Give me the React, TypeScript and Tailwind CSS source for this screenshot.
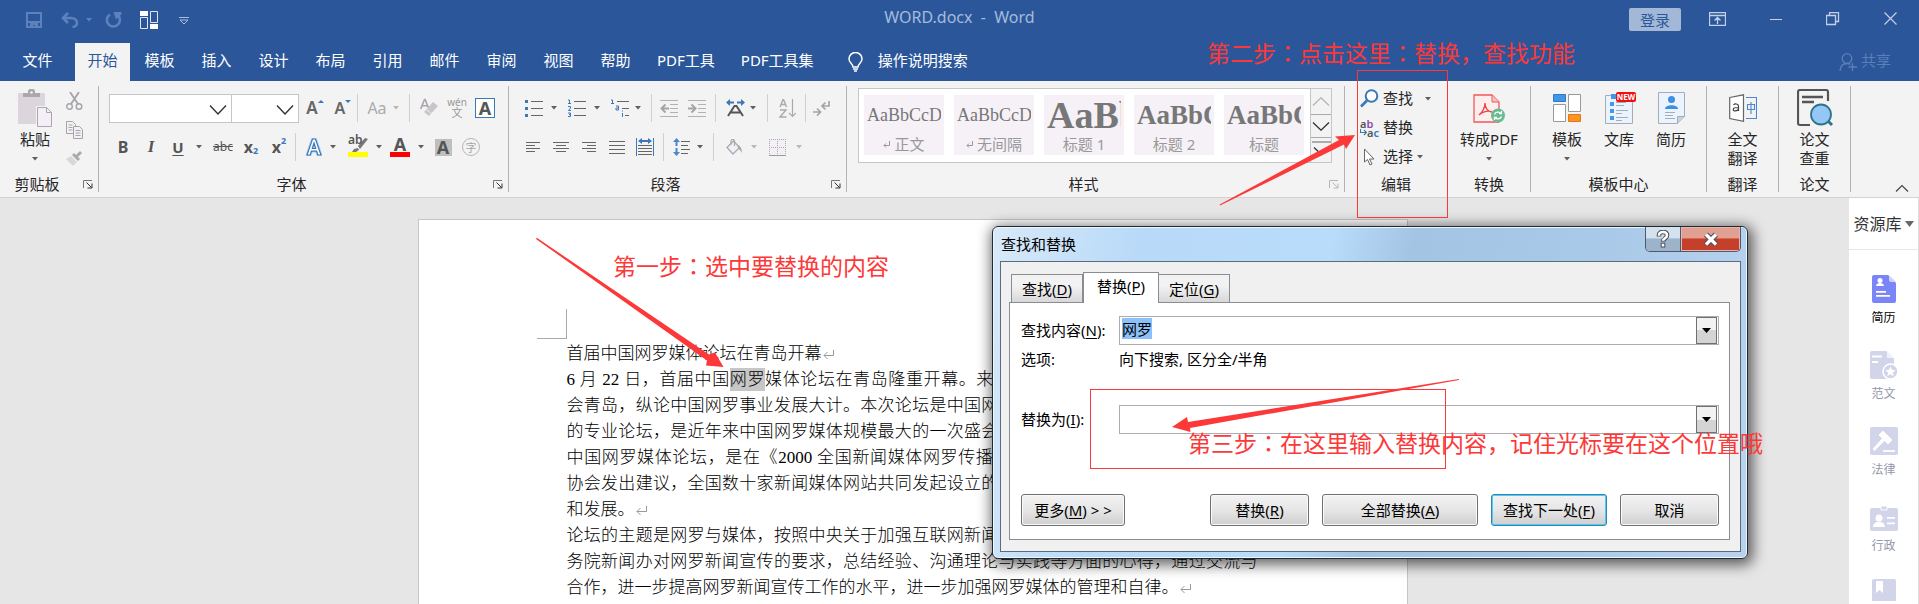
import React, { useEffect, useRef } from "react";

type Kids = { children?: React.ReactNode };

/* ---------- small shared pieces ---------- */

function Ico({ w, h, className = "", children }: Kids & { w: number; h: number; className?: string }) {
  return (
    <svg width={w} height={h} viewBox={`0 0 ${w} ${h}`} fill="none" aria-hidden="true" className={`shrink-0 ${className}`}>
      {children}
    </svg>
  );
}

function Caret({ faint = false }: { faint?: boolean }) {
  return (
    <Ico w={6} h={4}>
      <path d="M0 0h6L3 3.6z" fill={faint ? "#b8b8b8" : "#5f5f5f"} />
    </Ico>
  );
}

function Tool({ label, className, children }: Kids & { label: string; className: string }) {
  return (
    <button type="button" aria-label={label} title={label} className={`flex h-8 shrink-0 items-center justify-center ${className}`}>
      {children}
    </button>
  );
}

function Sep({ className = "w-2" }: { className?: string }) {
  return (
    <div className={`flex h-7 shrink-0 justify-center ${className}`}>
      <div className="w-px bg-[#d0d0d0]" />
    </div>
  );
}

function Group({ label, width, launcher, faint, children }: Kids & { label: string; width: string; launcher?: boolean; faint?: boolean }) {
  return (
    <section aria-label={label} className={`flex h-[106px] shrink-0 flex-col border-r border-[#b4b4b4] ${width}`}>
      <div className="flex min-h-0 flex-1 flex-col">{children}</div>
      <div className="flex h-[15px] items-center">
        <span className="flex-1 text-center leading-[15px]">{label}</span>
        {launcher && (
          <button type="button" aria-label={`${label}设置`} className="w-6 pl-[9px]">
            <Ico w={10} h={9}>
              <path d="M.5 8V.5H9" stroke={faint ? "#b5b5b5" : "#777"} />
              <path d="M3.5 2.5l5 5M9 3.5V8H4.5" stroke={faint ? "#b5b5b5" : "#333"} />
            </Ico>
          </button>
        )}
      </div>
    </section>
  );
}

function BigButton({ lines, caret, width, children }: Kids & { lines: string[]; caret?: boolean; width: string }) {
  return (
    <button type="button" className={`flex flex-col items-center ${width}`}>
      <span className="flex h-11 items-center justify-center">{children}</span>
      {lines.map((t) => (
        <span key={t} className="whitespace-nowrap leading-[19px]">{t}</span>
      ))}
      {caret && (
        <span className="flex h-5 items-center"><Caret /></span>
      )}
    </button>
  );
}

/* ---------- title bar and tabs ---------- */

function TitleBar() {
  return (
    <div className="grid h-[43px] grid-cols-[1fr_auto_1fr] pt-1">
      <div className="flex h-8 items-center pl-[26px] text-[#5c81bd]">
        <button type="button" aria-label="保存" className="mr-[19px]">
          <Ico w={16} h={16}>
            <path d="M1 1h14v14H1zM1 10h14" stroke="currentColor" strokeWidth="2" />
            <path d="M4 10h8v6H9v-3H7v3H4z" fill="currentColor" />
          </Ico>
        </button>
        <button type="button" aria-label="撤消" className="flex items-center gap-[7px]">
          <Ico w={18} h={16}>
            <path d="M2 6h8c4 0 6 2.300 6 4.800S14 15 11.500 15M7 1L2 6l5 5" stroke="currentColor" strokeWidth="2.600" />
          </Ico>
          <Ico w={6} h={4}><path d="M0 0h6L3 3.600z" fill="currentColor" /></Ico>
        </button>
        <button type="button" aria-label="重复" className="ml-[13px]">
          <Ico w={18} h={16}>
            <path d="M5 2.500A6.500 6.500 0 1 0 12.500 3" stroke="currentColor" strokeWidth="2.600" />
            <path d="M8.500 0h8v2.200L11 7.500z" fill="currentColor" />
          </Ico>
        </button>
        <button type="button" aria-label="触摸模式" className="ml-[17px]">
          <Ico w={18} h={18}>
            <path d="M.5 6.500h7v11h-7zM10.500.5h7v11h-7z" stroke="#dfe7f3" />
            <path d="M0 0h8v5H0zM10 13h8v5h-8z" fill="#fff" />
          </Ico>
        </button>
        <button type="button" aria-label="自定义快速访问工具栏" className="ml-[21px] pt-0.5">
          <Ico w={10} h={8}><path d="M0 .5h10M1 3l4 4 4-4z" stroke="#a9bddb" /></Ico>
        </button>
      </div>
      <h1 className="whitespace-pre pt-0.5 text-[16px] leading-[22px] text-[#a5bbdc]">WORD.docx  -  Word</h1>
      <div className="flex items-start justify-end pr-[22px] pt-1 text-[#c3d0e6]">
        <button type="button" className="mr-7 h-[23px] w-[52px] rounded-xs bg-[#a3b8d6] leading-[22px] text-[#2b579a]">登录</button>
        <button type="button" aria-label="功能区显示选项" className="mr-11 mt-1">
          <Ico w={17} h={14}>
            <path d="M.5.5h16v13H.5zM.5 3.500h16M8.500 12V6M5.500 8.500l3-3 3 3" stroke="currentColor" strokeWidth="1.300" />
          </Ico>
        </button>
        <button type="button" aria-label="最小化" className="mr-11 mt-[11px]">
          <Ico w={12} h={2}><path d="M0 .5h12" stroke="currentColor" /></Ico>
        </button>
        <button type="button" aria-label="还原" className="mr-11 mt-1">
          <Ico w={14} h={14}><path d="M.5 3.500h9v9h-9zM3.500 3.500v-3h9v9h-3" stroke="currentColor" strokeWidth="1.300" /></Ico>
        </button>
        <button type="button" aria-label="关闭" className="mt-1">
          <Ico w={13} h={13}><path d="M.5.5l12 12M12.500.5l-12 12" stroke="currentColor" strokeWidth="1.200" /></Ico>
        </button>
      </div>
    </div>
  );
}

const shortTabs = ["开始", "模板", "插入", "设计", "布局", "引用", "邮件", "审阅", "视图", "帮助"];

function TabBar() {
  return (
    <nav className="flex h-[38px] items-stretch pr-7 text-white">
      <button type="button" className="w-[75px] pb-1">文件</button>
      <div className="flex gap-0.5">
        {shortTabs.map((t) => (
          <button key={t} type="button" className={`w-[55px] pb-1 ${t === "开始" ? "bg-[#f3f3f3] text-[#2b579a]" : ""}`}>{t}</button>
        ))}
        <button type="button" className="px-3 pb-1">PDF工具</button>
        <button type="button" className="px-3 pb-1">PDF工具集</button>
      </div>
      <button type="button" className="ml-[22px] flex items-center gap-[15px] pb-1">
        <Ico w={15} h={20} className="mt-1">
          <path d="M5 15c0-3-4-4-4-8a6.500 6.500 0 0 1 13 0c0 4-4 5-4 8zM5 17h5M6 19h3" stroke="#fff" strokeWidth="1.500" />
        </Ico>
        操作说明搜索
      </button>
      <button type="button" className="ml-auto flex items-center gap-1 pb-1 text-[#5b7fba]">
        <Ico w={18} h={18} className="mt-1">
          <circle cx="8" cy="5.500" r="4.800" stroke="currentColor" strokeWidth="1.300" />
          <path d="M1 18c.3-4.500 3-7.500 7-7.500 1.500 0 2.600.3 3.500 1M13.500 10v8M9.500 14h8.500" stroke="currentColor" strokeWidth="1.300" />
        </Ico>
        共享
      </button>
    </nav>
  );
}

/* ---------- ribbon ---------- */

function ComboBox({ label, width }: { label: string; width: string }) {
  return (
    <div className={`relative h-[29px] border border-[#c6c6c6] bg-white ${width}`}>
      <select aria-label={label} className="size-full appearance-none bg-transparent outline-none" />
      <Ico w={18} h={10} className="pointer-events-none absolute right-1 top-[10px]">
        <path d="M1 .5l8 8.500 8-8.500" stroke="#333" strokeWidth="1.400" />
      </Ico>
    </div>
  );
}

function ClipboardGroup() {
  return (
    <Group label="剪贴板" width="w-[99px]" launcher>
      <div className="flex">
        <div className="w-[66px] pl-1">
          <BigButton lines={["粘贴"]} caret width="w-[62px]">
            <Ico w={34} h={38}>
              <path d="M0 4h27v31H0z" fill="#dcd6dc" />
              <path d="M5 8V4h5V2c0-1 1-2 2-2h3c1 0 2 1 2 2v2h5v4z" fill="#a9a9ab" />
              <circle cx="13.500" cy="3.500" r="1.300" fill="#f3f3f3" />
              <path d="M19.500 18.500h9l5 5v14h-14z" fill="#f4eff7" stroke="#f3f3f3" strokeWidth="3" />
              <path d="M19.500 18.500h9l5 5v14h-14zM28.500 18.500v5h5" fill="#f4eff7" stroke="#aaa6ac" />
            </Ico>
          </BigButton>
        </div>
        <div className="flex flex-col">
          <button type="button" aria-label="剪切" className="flex h-[29px] items-center">
            <Ico w={17} h={18}>
              <path d="M4 0l8 12M13 0L5 12" stroke="#a6a3a8" strokeWidth="1.800" />
              <circle cx="3.500" cy="14.500" r="2.800" stroke="#a6a3a8" strokeWidth="1.400" />
              <circle cx="13" cy="14.500" r="2.800" stroke="#a6a3a8" strokeWidth="1.400" />
            </Ico>
          </button>
          <button type="button" aria-label="复制" className="flex h-[29px] items-center">
            <Ico w={17} h={18}>
              <path d="M.5.500h6l3 3v9h-9zM2.500 4h4M2.500 6.500h4M2.500 9h4" stroke="#a6a3a8" />
              <path d="M7.500 5.500h6l3 3v9h-9z" fill="#f4eff7" stroke="#a6a3a8" />
              <path d="M9.500 9.500h5M9.500 12h5M9.500 14.500h5" stroke="#a6a3a8" />
            </Ico>
          </button>
          <button type="button" aria-label="格式刷" className="flex h-[29px] items-center">
            <Ico w={17} h={15}>
              <path d="M0 8l5-3 6 6-4 4z" fill="#dcd6dc" />
              <path d="M6 4l6 6 2-2-2-2 4-4-2-2-4 4-2-2z" fill="#a9a9ab" />
            </Ico>
          </button>
        </div>
      </div>
    </Group>
  );
}

const glyph = "font-bold text-[#555]";

function FontGroup() {
  return (
    <Group label="字体" width="w-[410px]" launcher>
      <div className="flex flex-col gap-[7px] pl-2.5 pt-1.5">
        <div className="flex h-8 items-center">
          <ComboBox label="字体名称" width="w-[123px]" />
          <ComboBox label="字号" width="-ml-px w-[68px]" />
          <Tool label="增大字号" className="w-7 pl-1">
            <span className="text-[17px] font-semibold text-[#666]">A</span>
            <Ico w={6} h={16}><path d="M0 3l3-3 3 3z" fill="#3a78b7" /></Ico>
          </Tool>
          <Tool label="减小字号" className="w-7 pl-1">
            <span className="text-[16px] font-semibold text-[#666]">A</span>
            <Ico w={6} h={16}><path d="M0 0h6L3 3z" fill="#3a78b7" /></Ico>
          </Tool>
          <Sep className="w-1" />
          <Tool label="更改大小写" className="w-12 gap-1.5">
            <span className="text-[16px] text-[#aaa]">Aa</span>
            <Caret faint />
          </Tool>
          <Sep className="w-1" />
          <Tool label="清除所有格式" className="w-9">
            <Ico w={18} h={20}>
              <path d="M.7 11L4.500 1.500h.6L9 11M2 7.800h5.500" stroke="#a9a6ab" strokeWidth="1.600" />
              <path d="M13 4l5 4-9 10-5-4z" fill="#cbc4cb" />
              <path d="M6.500 11.500l5 4.200" stroke="#f3f3f3" />
            </Ico>
          </Tool>
          <Tool label="拼音指南" className="w-5 flex-col">
            <span className="text-[10px] leading-[9px] text-[#999]">wén</span>
            <span className="text-[11px] leading-[11px] text-[#999]">文</span>
          </Tool>
          <Tool label="字符边框" className="w-9">
            <span className={`flex size-5 items-center justify-center border border-[#3a78b7] bg-white text-[18px] leading-none ${glyph}`}>A</span>
          </Tool>
        </div>
        <div className="flex h-8 items-center">
          <Tool label="加粗" className={`w-7 text-[16px] ${glyph}`}>B</Tool>
          <Tool label="倾斜" className={`w-7 font-['Liberation_Serif'] text-[17px] italic ${glyph}`}>I</Tool>
          <Tool label="下划线" className={`w-11 gap-3 text-[15px] ${glyph}`}>
            <span className="underline underline-offset-2">U</span>
            <Caret />
          </Tool>
          <Tool label="删除线" className="w-7 text-[12px] text-[#555] line-through">abc</Tool>
          <Tool label="下标" className={`w-7 text-[16px] ${glyph}`}>
            x<span className="pt-2 text-[9px] text-[#3a78b7]">2</span>
          </Tool>
          <Tool label="上标" className={`w-7 text-[16px] ${glyph}`}>
            x<span className="pb-3 text-[9px] text-[#3a78b7]">2</span>
          </Tool>
          <Sep className="w-1" />
          <Tool label="文本效果" className="w-12 gap-2">
            <Ico w={16} h={18}>
              <path d="M1 17L6.500 1h3L15 17h-3.200l-1.200-3.800H5.400L4.200 17zM6.300 10.500h3.400L8 5z" fill="#fff" stroke="#b9d5f0" strokeWidth="3" />
              <path d="M1 17L6.500 1h3L15 17h-3.200l-1.200-3.800H5.400L4.200 17zM6.300 10.500h3.400L8 5z" fill="#fff" stroke="#3a78b7" strokeWidth="1.200" />
            </Ico>
            <Caret />
          </Tool>
          <Tool label="突出显示" className="w-10 gap-2">
            <span className="relative flex h-5 w-5 flex-col justify-end">
              <span className="absolute left-0 top-[-4px] text-[12px] font-semibold leading-[14px] text-[#555]">ab</span>
              <Ico w={20} h={15}><path d="M4 15l2-3 4-1 1 2-3 2zM10 9L17 1l3 1-8 10z" fill="#777" /></Ico>
              <span className="h-[5px] bg-[#ff0]" />
            </span>
            <Caret />
          </Tool>
          <Tool label="字体颜色" className="w-11 gap-2">
            <span className="flex w-5 flex-col items-center">
              <span className={`text-[18px] leading-[15px] ${glyph}`}>A</span>
              <span className="h-[5px] w-full bg-[#f00]" />
            </span>
            <Caret />
          </Tool>
          <Tool label="字符底纹" className="w-7">
            <span className={`flex size-[17px] items-center justify-center bg-[#bfbfbf] text-[18px] leading-none ${glyph}`}>A</span>
          </Tool>
          <Tool label="带圈字符" className="w-7">
            <span className="flex size-[18px] items-center justify-center rounded-full border border-[#b9b4ba] text-[11px] leading-none text-[#a5a5a5]">字</span>
          </Tool>
        </div>
      </div>
    </Group>
  );
}

function ParagraphGroup() {
  return (
    <Group label="段落" width="w-[338px]" launcher>
      <div className="flex flex-col gap-[7px] pl-2.5 pt-1.5">
        <div className="flex h-8 items-center">
          <Tool label="项目符号" className="w-11 gap-2">
            <Ico w={18} h={18}>
              <path d="M6 2.500h12M6 9.500h12M6 16.500h12" stroke="#666" />
              <path d="M0 1h3v3H0zM0 8h3v3H0zM0 15h3v3H0z" fill="#3a78b7" />
            </Ico>
            <Caret />
          </Tool>
          <Tool label="编号" className="w-[42px] gap-2">
            <Ico w={18} h={18}>
              <path d="M6 2.500h12M6 9.500h12M6 16.500h12" stroke="#666" />
              <path d="M0 1h1.500v3.500M0 4.500h3M0 7.500h2.500v1.500L.5 11.500H3M0 14h2.500v1.500H1 2.500v2H0" stroke="#3a78b7" />
            </Ico>
            <Caret />
          </Tool>
          <Tool label="多级列表" className="w-[42px] gap-1.5">
            <Ico w={18} h={18}>
              <path d="M6 2.500h12M11 9.500h7M14 16.500h4" stroke="#666" />
              <path d="M0 1h1.500v3.500M0 4.500h3M5 7h2.500v4H5V9h2M11.500 13v0M11.500 14v4M11.500 11.500v1" stroke="#3a78b7" />
            </Ico>
            <Caret />
          </Tool>
          <Sep />
          <Tool label="减少缩进量" className="w-7">
            <Ico w={18} h={17}>
              <path d="M0 .5h18M10 4.500h8M10 8.500h8M10 12.500h8M0 16.500h18" stroke="#b2b2b2" />
              <path d="M9 8.500H2M5.500 4.500l-4 4 4 4" stroke="#a5a5a5" strokeWidth="2" />
            </Ico>
          </Tool>
          <Tool label="增加缩进量" className="w-7">
            <Ico w={18} h={17}>
              <path d="M0 .5h18M10 4.500h8M10 8.500h8M10 12.500h8M0 16.500h18" stroke="#b2b2b2" />
              <path d="M0 8.500h7M3.500 4.500l4 4-4 4" stroke="#a5a5a5" strokeWidth="2" />
            </Ico>
          </Tool>
          <Sep />
          <Tool label="中文版式" className="w-11 gap-[5px]">
            <Ico w={19} h={18}>
              <path d="M2 17L8.500 7h2L17 17M5 13.500h9" stroke="#555" strokeWidth="2" />
              <path d="M0 3.500L4 0v2.500h4v2H4V7zM19 3.500L15 0v2.500h-4v2h4V7z" fill="#3a78b7" />
            </Ico>
            <Caret />
          </Tool>
          <Sep />
          <Tool label="排序" className="w-8">
            <Ico w={17} h={19}>
              <path d="M1 8L4 .5h.5L7.500 8M2 5.500h4.500M1 11h6L1 18h6.500" stroke="#aaa" strokeWidth="1.400" />
              <path d="M13.500 0v17M10 14l3.500 3.500L17 14" stroke="#aaa" strokeWidth="1.200" />
            </Ico>
          </Tool>
          <Sep className="w-1" />
          <Tool label="显示编辑标记" className="w-7">
            <Ico w={17} h={16}>
              <path d="M16 1v5h-6M12.500 2.500L9 6l3.500 3.500M0 12h7M4 8.500L7.500 12 4 15.500" stroke="#a5a5a5" strokeWidth="1.700" />
            </Ico>
          </Tool>
        </div>
        <div className="flex h-8 items-center">
          <Tool label="左对齐" className="w-7">
            <Ico w={14} h={11}><path d="M0 .5h14M0 3.500h9M0 6.500h14M0 9.500h9" stroke="#666" /></Ico>
          </Tool>
          <Tool label="居中" className="w-7">
            <Ico w={16} h={11}><path d="M0 .5h16M3 3.500h10M0 6.500h16M3 9.500h10" stroke="#666" /></Ico>
          </Tool>
          <Tool label="右对齐" className="w-7">
            <Ico w={14} h={11}><path d="M0 .5h14M5 3.500h9M0 6.500h14M5 9.500h9" stroke="#666" /></Ico>
          </Tool>
          <Tool label="两端对齐" className="w-7">
            <Ico w={16} h={13}><path d="M0 .5h16M0 4.500h16M0 8.500h16M0 12.500h16" stroke="#666" /></Ico>
          </Tool>
          <Tool label="分散对齐" className="w-7">
            <Ico w={18} h={18}>
              <path d="M2 7.500h14M2 10.500h14M2 13.500h14M2 16.500h14" stroke="#666" />
              <path d="M.5 0v18M17.500 0v18" stroke="#3a78b7" />
              <path d="M2 3l4-3v2h6V0l4 3-4 3V4H6v2z" fill="#3a78b7" />
            </Ico>
          </Tool>
          <Sep />
          <Tool label="行距" className="w-[42px] gap-[7px]">
            <Ico w={17} h={18}>
              <path d="M8 3.500h9M8 7.500h7M8 11.500h9M8 15.500h7" stroke="#666" />
              <path d="M3.500 0L7 4H4.500v4h-2V4H0zM3.500 18L0 14h2.500v-4h2v4H7z" fill="#4a86c8" />
            </Ico>
            <Caret />
          </Tool>
          <Sep />
          <Tool label="底纹" className="w-12 gap-2">
            <Ico w={17} h={17}>
              <path d="M1 8.500L7.500 2l6 6.500L7 15z" fill="#f4eff7" stroke="#aaa" strokeWidth="1.300" />
              <path d="M5 6V2c0-2 3.500-2 3.500 0v5" stroke="#aaa" strokeWidth="1.200" />
              <path d="M11 6c3 0 5 3 5 8-1-2-2-3-3.500-4z" fill="#aaa" />
            </Ico>
            <Caret faint />
          </Tool>
          <Tool label="边框" className="w-10 gap-2.5">
            <Ico w={17} h={17}>
              <path d="M.5.5h16v16H.5z" fill="#f4eff7" />
              <path d="M0 .5h17M.5 0v16M16.500 0v16M8.500 0v16M0 8.500h17" stroke="#aaa" strokeDasharray="1 1" />
              <path d="M0 16.500h17" stroke="#999" />
            </Ico>
            <Caret faint />
          </Tool>
        </div>
      </div>
    </Group>
  );
}

const styles = [
  { name: "正文", sample: "AaBbCcD", cls: "text-[18px]", mark: true },
  { name: "无间隔", sample: "AaBbCcD", cls: "text-[18px]", mark: true },
  { name: "标题 1", sample: "AaBb", cls: "text-[38px] font-bold" },
  { name: "标题 2", sample: "AaBbC", cls: "text-[27px] font-bold" },
  { name: "标题", sample: "AaBbC", cls: "text-[27px] font-bold" },
];

function StylesGroup() {
  return (
    <Group label="样式" width="w-[498px]" launcher faint>
      <div className="ml-[11px] mt-0.5 flex h-[75px] w-[474px] border border-[#c6c6c6] bg-white">
        <div className="flex flex-1 gap-2.5 pl-[5px] pt-1.5">
          {styles.map((s) => (
            <button key={s.name} type="button" className="flex h-[60px] w-20 shrink-0 flex-col overflow-hidden bg-[#f5f1f7]">
              <span className={`mx-[3px] flex h-10 w-[74px] items-center overflow-hidden whitespace-nowrap font-['Liberation_Serif'] leading-none text-[#777] ${s.cls}`}>{s.sample}</span>
              <span className="flex w-full items-center justify-center gap-1 leading-[18px] text-[#999]">
                {s.mark && (
                  <Ico w={7} h={7}><path d="M6.500 0v4.500H1M3 2.500l-2 2 2 2" stroke="#999" /></Ico>
                )}
                {s.name}
              </span>
            </button>
          ))}
        </div>
        <div className="flex w-[21px] flex-col border-l border-[#c6c6c6] bg-[#f3f3f3]">
          <button type="button" aria-label="上一行" className="flex h-[25px] items-center justify-center">
            <Ico w={18} h={9}><path d="M1 8.500L9 .8l8 7.700" stroke="#b4b4b4" strokeWidth="1.300" /></Ico>
          </button>
          <button type="button" aria-label="下一行" className="flex h-6 items-center justify-center border-y border-[#aaa]">
            <Ico w={18} h={9}><path d="M1 .5l8 7.700L17 .5" stroke="#333" strokeWidth="1.300" /></Ico>
          </button>
          <button type="button" aria-label="其他" className="flex flex-1 items-start justify-center pt-0.5">
            <Ico w={19} h={16}><path d="M0 2h19" stroke="#666" /><path d="M2 7.500l7.500 7 7.500-7" stroke="#333" strokeWidth="1.300" /></Ico>
          </button>
        </div>
      </div>
    </Group>
  );
}

function EditGroup() {
  return (
    <Group label="编辑" width="w-[103px]">
      <div className="-mt-0.5 flex flex-col pl-[15px]">
        <button type="button" className="flex h-[29px] items-center gap-1">
          <Ico w={19} h={19}>
            <circle cx="11.500" cy="7" r="5.800" fill="#fff" stroke="#3a78b7" strokeWidth="2" />
            <path d="M7 11.500L1 17.500" stroke="#3a78b7" strokeWidth="2.600" />
          </Ico>
          查找
          <span className="pl-2"><Caret /></span>
        </button>
        <button type="button" className="flex h-[29px] items-center gap-1">
          <span className="grid w-[19px] text-[11px] font-semibold leading-[9px]">
            <span className="text-left text-[#555]">a<span className="text-[#8b4fae]">b</span></span>
            <span className="flex items-center justify-end text-[#555]">
              <Ico w={7} h={7}><path d="M.5 0v3.500H6M4 1l2.500 2.500L4 6" stroke="#3a78b7" strokeWidth="1.200" /></Ico>
              a<span className="text-[#3a78b7]">c</span>
            </span>
          </span>
          替换
        </button>
        <button type="button" className="flex h-[29px] items-center gap-1">
          <Ico w={19} h={18}>
            <path d="M4.500 1v13l3-2.500 2.500 5.500 2-1-2.500-5h4.500z" fill="#fff" stroke="#666" />
          </Ico>
          选择
          <Caret />
        </button>
      </div>
    </Group>
  );
}

function Ribbon() {
  return (
    <div className="flex h-[117px] border-b border-[#d2d2d2] bg-[#f3f3f3] py-[5px] text-[#262626]">
      <ClipboardGroup />
      <FontGroup />
      <ParagraphGroup />
      <StylesGroup />
      <EditGroup />
      <Group label="转换" width="w-[83px]">
        <BigButton lines={["转成PDF"]} caret width="w-[82px]">
          <Ico w={32} h={29}>
            <path d="M1 1h18l7 7v20H1z" fill="#fdeeee" stroke="#ee5a5a" strokeWidth="1.300" />
            <path d="M19 1v7h7" fill="#f4c4c4" stroke="#ee5a5a" />
            <path d="M6 21c3-2 6-7 6-12M12 9c0 5 3 9 7 9M6 21c3-3 9-5 13-3" stroke="#ee4444" strokeWidth="1.300" />
            <circle cx="25" cy="21.500" r="7" fill="#6bbb92" />
            <path d="M21.500 20.500c1-3 5-3 6.500-1M28.500 17v2.500H26M28.500 22.500c-1 3-5 3-6.500 1M21.500 26v-2.500H24" stroke="#fff" strokeWidth="1.300" />
          </Ico>
        </BigButton>
      </Group>
      <Group label="模板中心" width="w-[176px]">
        <div className="flex pl-2.5">
          <BigButton lines={["模板"]} caret width="w-[52px]">
            <Ico w={28} h={28}>
              <path d="M.5.500h12v7H.5z" fill="#4396e6" stroke="#2a7bd0" />
              <path d="M15.500.500h12v17h-12zM.5 10.500h12v17H.5z" fill="#fff" stroke="#999" />
              <path d="M15.500 20.500h12v7h-12z" fill="#ff9226" stroke="#e07a10" />
            </Ico>
          </BigButton>
          <BigButton lines={["文库"]} width="w-[52px]">
            <span className="relative flex">
              <Ico w={28} h={32}>
                <path d="M.5 3.500h27v28H.5z" fill="#eaf3fe" stroke="#a3adb8" />
                <path d="M6 2h8v5H6zM5 10h4v4H5zM5 17h4v4H5zM5 24h4v4H5z" fill="#4396e6" />
                <path d="M11 13.500h8M11 18.500h12M11 21.500h6M11 25.500h12M11 28.500h6M11 10.500h10" stroke="#a3adb8" />
              </Ico>
              <span className="absolute -right-[3px] top-0 h-[10px] w-5 rounded-xs bg-[#f01010] text-center text-[8px] font-bold leading-[10px] text-white">NEW</span>
            </span>
          </BigButton>
          <BigButton lines={["简历"]} width="w-[52px]">
            <Ico w={27} h={32}>
              <path d="M.5.500h26v24l-7 7H.5z" fill="#eaf3fe" stroke="#a3adb8" />
              <path d="M19.500 31.500v-7h7" fill="#ccd3da" stroke="#a3adb8" />
              <circle cx="13.500" cy="7.500" r="3.500" fill="#3d8fe0" />
              <path d="M7 17c0-5 13-5 13 0z" fill="#3d8fe0" />
              <path d="M7 20.500h10M7 23.500h8M7 26.500h10" stroke="#a3adb8" />
            </Ico>
          </BigButton>
        </div>
      </Group>
      <Group label="翻译" width="w-[72px]">
        <BigButton lines={["全文", "翻译"]} width="w-[71px]">
          <Ico w={28} h={28}>
            <path d="M.7 3.500L14.500.8v26.500L.7 24.500z" fill="#fff" stroke="#666" strokeWidth="1.200" />
            <path d="M17 3.500h10.500v21H17M18.500 10.500h7v5h-7zM22 8v12" stroke="#4b87d6" strokeWidth="1.100" />
            <path d="M4.500 11c1-1.500 5-1.500 5 1v5M9.500 13.500c-2 0-5.300 0-5.300 2s4.300 2 5.300-.5" stroke="#444" strokeWidth="1.200" />
          </Ico>
        </BigButton>
      </Group>
      <Group label="论文" width="w-[72px]">
        <BigButton lines={["论文", "查重"]} width="w-[71px]">
          <Ico w={36} h={38}>
            <path d="M13 36H3c-1 0-2-1-2-2V3c0-1 1-2 2-2h26c1 0 2 1 2 2v9" stroke="#555" strokeWidth="2.200" />
            <path d="M5 8h21M5 13h12" stroke="#555" strokeWidth="2.400" />
            <path d="M30 31l5 5" stroke="#2d7488" strokeWidth="3" />
            <circle cx="24" cy="25.500" r="10" fill="#94c6f6" stroke="#2d7488" strokeWidth="1.800" />
          </Ico>
        </BigButton>
      </Group>
      <div className="flex flex-1 items-end justify-end pr-2.5">
        <button type="button" aria-label="折叠功能区">
          <Ico w={14} h={8}><path d="M1 7.500l6-6 6 6" stroke="#444" strokeWidth="1.200" /></Ico>
        </button>
      </div>
    </div>
  );
}

/* ---------- document ---------- */

function ReturnMark() {
  return (
    <Ico w={12} h={10} className="ml-px inline">
      <path d="M10.500 0v5.500H1M4.500 2L1 5.500 4.500 9" stroke="#999" />
    </Ico>
  );
}

type Line = { text: React.ReactNode; end?: boolean };

const bodyLines: Line[] = [
  { text: "首届中国网罗媒体论坛在青岛开幕", end: true },
  { text: <>6 月 22 日，首届中国<mark className="bg-[#c6c6c6] py-0.5 text-inherit">网罗</mark>媒体论坛在青岛隆重开幕。来自各地新闻媒体的数百位代表相聚</> },
  { text: "会青岛，纵论中国网罗事业发展大计。本次论坛是中国网罗媒体领域规格最高影响力最强大" },
  { text: "的专业论坛，是近年来中国网罗媒体规模最大的一次盛会。此前已连续举办过三届的全国性" },
  { text: "中国网罗媒体论坛，是在《2000 全国新闻媒体网罗传播研讨会》期间由中国新闻工作者的" },
  { text: "协会发出建议，全国数十家新闻媒体网站共同发起设立的，旨在推动我国网罗媒体健康有序" },
  { text: "和发展。", end: true },
  { text: "论坛的主题是网罗与媒体，按照中央关于加强互联网新闻宣传工作的重要部署以及中共和国" },
  { text: "务院新闻办对网罗新闻宣传的要求，总结经验、沟通理论与实践等方面的心得，通过交流与" },
  { text: "合作，进一步提高网罗新闻宣传工作的水平，进一步加强网罗媒体的管理和自律。", end: true },
];

function Page() {
  return (
    <article className="mt-[21px] w-[990px] shrink-0 border border-b-0 border-[#c6c6c6] bg-white pb-10 pl-[118px] pt-[89px]">
      <div className="size-[30px] border-b border-r border-[#aaa]" />
      <div className="ml-[30px] mt-0.5 w-[691px] whitespace-nowrap font-['Liberation_Serif','Noto_Sans_CJK_SC',serif] text-[17px] font-light leading-[26px] text-black">
        {bodyLines.map((l, i) => (
          <p key={i} className={`h-[26px] ${l.end ? "" : "text-justify [text-align-last:justify]"}`}>
            {l.text}
            {l.end && <ReturnMark />}
          </p>
        ))}
      </div>
    </article>
  );
}

/* ---------- side panel ---------- */

function SideIcon({ kind }: { kind: number }) {
  const c = kind === 0 ? "#7a86f8" : "#d2d4ea";
  return (
    <Ico w={28} h={28}>
      {kind === 0 && (
        <>
          <path d="M4 0h14l8 8v18a2 2 0 0 1-2 2H4a2 2 0 0 1-2-2V2a2 2 0 0 1 2-2z" fill={c} />
          <path d="M19 0l7 7h-5c-1 0-2-1-2-2z" fill="#cdd1fd" />
          <circle cx="10" cy="5.500" r="2.500" fill="#fff" />
          <path d="M6 11c0-4 8-4 8 0zM6 16h10v1.800H6zM6 20h14v1.800H6z" fill="#fff" />
        </>
      )}
      {kind === 1 && (
        <>
          <path d="M2 0h14l8 8v20H2a2 2 0 0 1-2-2V2a2 2 0 0 1 2-2z" fill={c} />
          <path d="M17 0l7 7h-7z" fill="#f1f1f9" />
          <path d="M2 5.500h10M2 11h6" stroke="#fff" strokeWidth="1.800" />
          <circle cx="20.500" cy="20.500" r="7.500" fill={c} stroke="#fff" strokeWidth="1.500" />
          <path d="M20.500 15.500l1.500 3.300 3.600.4-2.700 2.400.8 3.600-3.200-1.900-3.200 1.900.8-3.600-2.700-2.400 3.600-.4z" fill="#fff" />
        </>
      )}
      {kind === 2 && (
        <>
          <rect width="28" height="28" rx="2" fill={c} />
          <path d="M13 4l9 9-4 4-9-9zM12 12L3 22l1.500 1.500L14 14z" fill="#fff" stroke="#fff" />
          <path d="M13 24h12" stroke="#fff" strokeWidth="1.800" />
        </>
      )}
      {kind === 3 && (
        <>
          <rect y="5" width="28" height="23" rx="2" fill={c} />
          <path d="M11 3h6v4h-6z" fill={c} stroke="#fff" />
          <circle cx="9" cy="15" r="3.500" fill="#fff" />
          <path d="M3 24c0-7 12-7 12 0zM17 14h8v1.800h-8zM17 19.500h8v1.800h-8z" fill="#fff" />
        </>
      )}
      {kind === 4 && (
        <>
          <path d="M4 0h20a2 2 0 0 1 2 2v20H2V2a2 2 0 0 1 2-2z" fill={c} />
          <path d="M6 2h7v12l-3.500-3L6 14z" fill="#fff" />
        </>
      )}
    </Ico>
  );
}

function SidePanel() {
  return (
    <aside className="flex w-[70px] shrink-0 flex-col border-r border-[#ddd] bg-white">
      <button type="button" className="flex h-[52px] shrink-0 items-center justify-center gap-[3px] border-b border-[#e6e6e6] text-[16px] text-[#333]">
        资源库
        <Ico w={9} h={6}><path d="M0 0h9L4.500 6z" fill="#666" /></Ico>
      </button>
      <ul className="flex flex-col pt-[25px] text-[12px]">
        {["简历", "范文", "法律", "行政", ""].map((t, i) => (
          <li key={i} className="h-[76px] shrink-0">
            <button type="button" aria-label={t || "书签"} className={`flex w-full flex-col items-center gap-1.5 leading-[18px] ${i === 0 ? "text-black" : "text-[#9497ad]"}`}>
              <SideIcon kind={i} />
              {t}
            </button>
          </li>
        ))}
      </ul>
    </aside>
  );
}

/* ---------- find and replace dialog ---------- */

function Key({ children }: Kids) {
  return <>(<span className="underline underline-offset-2">{children}</span>)</>;
}

function DialogField({ id, label, hot, value, focus }: { id: string; label: string; hot: string; value: string; focus?: boolean }) {
  const ref = useRef<HTMLInputElement>(null);
  useEffect(() => {
    if (focus) ref.current?.select();
  }, [focus]);
  return (
    <div className="flex items-center">
      <label htmlFor={id} className="w-[98px] shrink-0">{label}<Key>{hot}</Key>:</label>
      <div className="flex h-[29px] flex-1 border border-[#abadb3] bg-white pr-px">
        <input ref={ref} id={id} defaultValue={value} className="h-[22px] min-w-0 flex-1 px-0.5 leading-[20px] outline-none selection:bg-[#8bc0f8] selection:text-black" />
        <button type="button" aria-label={`${label}列表`} className="flex h-[27px] w-[21px] items-center justify-center border border-[#707070] bg-linear-to-b from-[#f2f2f2] from-50% to-[#d4d4d4] to-50%">
          <Ico w={9} h={5}><path d="M0 0h9L4.500 5z" fill="#000" /></Ico>
        </button>
      </div>
    </div>
  );
}

function PushButton({ width, primary, children }: Kids & { width: string; primary?: boolean }) {
  return (
    <button type="button" className={`h-8 shrink-0 rounded-[3px] border bg-linear-to-b from-[#f3f3f3] via-[#e6e6e6] to-[#cfcfcf] leading-[28px] ${width} ${primary ? "border-[#3c7fb1] shadow-[inset_0_0_0_1px_#46d0f5]" : "border-[#707070] shadow-[inset_0_0_0_1px_#fafafa]"}`}>
      {children}
    </button>
  );
}

function FindReplaceDialog() {
  return (
    <div role="dialog" aria-label="查找和替换" className="absolute left-[992px] top-[226px] flex w-[756px] flex-col rounded-md border border-[#1f2a36] bg-[linear-gradient(100deg,#d9e9f9_0%,#b8daf8_18%,#b9dcfa_42%,#a4c4e4_52%,#a9c9e8_75%,#b9d3ee_100%)] pb-1.5 pl-[7px] pr-[6px] text-black shadow-[inset_0_0_0_1px_#eef6fd,2px_3px_14px_3px_rgba(0,0,0,0.6)]">
      <div className="flex h-[34px] items-start pl-px">
        <h2 className="flex-1 leading-[34px]">查找和替换</h2>
        <div className="flex h-[25px] overflow-hidden rounded-b-[5px] border border-t-0 border-[#4a5a70]">
          <button type="button" aria-label="帮助" className="flex w-[35px] items-center justify-center border-r border-[#4a5a70] bg-linear-to-b from-[#d4e1ef] from-45% to-[#9db3c9] to-50%">
            <Ico w={14} h={18}>
              <path d="M3 6.500V5c0-2 1.500-3 4-3s4 1 4 3.500-4 3-4 6" stroke="#4a4f5a" strokeWidth="4.600" />
              <path d="M7 12.800v4.700" stroke="#4a4f5a" strokeWidth="4.600" />
              <path d="M3 5.800V5c0-2 1.500-3 4-3s4 1 4 3.500-4 3-4 5.300M7 13.800v2.700" stroke="#fff" strokeWidth="2.600" />
            </Ico>
          </button>
          <button type="button" aria-label="关闭对话框" className="flex w-[59px] items-center justify-center bg-linear-to-b from-[#e2a092] from-45% to-[#c4402a] to-50% shadow-[inset_0_0_0_1px_#eab5a8]">
            <Ico w={16} h={15}>
              <path d="M3 2.500l10 10M13 2.500l-10 10" stroke="#4f4a55" strokeWidth="5.500" />
              <path d="M3 2.500l10 10M13 2.500l-10 10" stroke="#fff" strokeWidth="3.400" />
            </Ico>
          </button>
        </div>
      </div>
      <div className="border border-[#5a6b80] bg-[#f0f0f0] px-2 pb-[11px] pt-2.5">
        <div className="flex items-end pl-0.5">
          <button type="button" className="h-7 w-[72px] border border-b-0 border-[#898c95] bg-linear-to-b from-[#f2f2f2] from-40% to-[#d8d8d8] leading-[26px]">查找<Key>D</Key></button>
          <button type="button" className="-mb-px h-[31px] w-[76px] border-x border-t border-[#898c95] bg-white pb-1 leading-[26px]">替换<Key>P</Key></button>
          <button type="button" className="h-7 w-[71px] border border-b-0 border-l-0 border-[#898c95] bg-linear-to-b from-[#f2f2f2] from-40% to-[#d8d8d8] leading-[26px]">定位<Key>G</Key></button>
        </div>
        <div className="mr-0.5 border border-[#898c95] bg-white px-[10px] pb-[13px] pl-[11px] pt-[13px]">
          <DialogField id="find-text" label="查找内容" hot="N" value="网罗" focus />
          <div className="flex h-[60px] pt-[3px] leading-[22px]">
            <span className="w-[98px]">选项:</span>
            <span>向下搜索, 区分全/半角</span>
          </div>
          <DialogField id="replace-text" label="替换为" hot="I" value="" />
          <div className="mt-[60px] flex gap-[13px]">
            <PushButton width="w-[104px] mr-auto">更多<Key>M</Key> &gt; &gt;</PushButton>
            <PushButton width="w-[99px]">替换<Key>R</Key></PushButton>
            <PushButton width="w-[156px]">全部替换<Key>A</Key></PushButton>
            <PushButton width="w-[116px]" primary>查找下一处<Key>F</Key></PushButton>
            <PushButton width="w-[99px]">取消</PushButton>
          </div>
        </div>
      </div>
    </div>
  );
}

/* ---------- tutorial marks drawn over the window ---------- */

function Colon() {
  return <span className="font-['Noto_Sans_CJK_TC']" lang="zh-TW">：</span>;
}

function Annotations() {
  const note = "absolute whitespace-nowrap text-[23px] leading-[30px] text-[#fc3838]";
  return (
    <div className="pointer-events-none absolute inset-0 overflow-hidden">
      <div className="absolute left-[1357px] top-[70px] h-[148px] w-[91px] border border-[#fc3838]" />
      <div className="absolute left-[1090px] top-[389px] h-[80px] w-[356px] border border-[#fc3838]" />
      <svg className="absolute left-0 top-0" width="1919" height="604" viewBox="0 0 1919 604" fill="#fc3838" aria-hidden="true">
        <path d="M536 239l.8-1.200L709 354.500l6-2 8.500 14.500L706 365.500l1-5z" />
        <path d="M1220 205.500l-.3-1L1339 140l-4-3.500 20-1.500-9 14-2-4.500z" />
        <path d="M1459 379v1L1190 428l.5 4-18.500-5 15-10 1 5z" />
      </svg>
      <p className={`${note} left-[613px] top-[250px]`}>第一步<Colon />选中要替换的内容</p>
      <p className={`${note} left-[1207px] top-[37px]`}>第二步<Colon />点击这里<Colon />替换，查找功能</p>
      <p className={`${note} left-[1188px] top-[427px]`}>第三步<Colon />在这里输入替换内容，记住光标要在这个位置哦</p>
    </div>
  );
}

export default function App() {
  return (
    <div className="relative flex h-screen flex-col overflow-hidden bg-[#e6e6e6] font-['Noto_Sans','Noto_Sans_CJK_SC',sans-serif] text-[15px]">
      <header className="shrink-0 bg-[#2b579a]">
        <TitleBar />
        <TabBar />
      </header>
      <Ribbon />
      <main className="flex min-h-0 flex-1">
        <div className="flex min-w-0 flex-1 items-start justify-center overflow-hidden pr-[24px]">
          <Page />
        </div>
        <SidePanel />
      </main>
      <FindReplaceDialog />
      <Annotations />
    </div>
  );
}
